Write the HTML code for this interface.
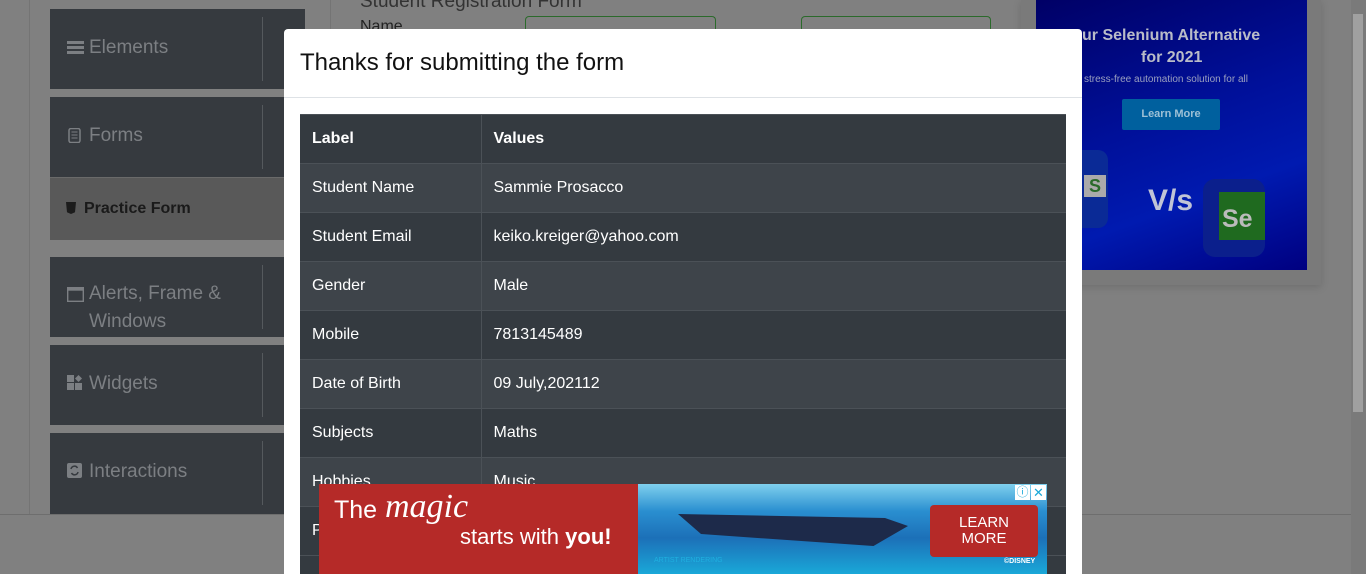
<!DOCTYPE html>
<html style="width:1366px;height:574px;overflow:hidden"><head><meta charset="utf-8"><style>
*{box-sizing:border-box;margin:0;padding:0}
body{width:1366px;height:574px;overflow:hidden;background:#808080;font-family:"Liberation Sans",Arial,sans-serif;position:relative}
.a{position:absolute}
.panel{position:absolute;left:50px;width:255px;height:80px;background:#363a3f;color:#7c7f83;font-size:19px}
.panel .t{position:absolute;left:39px;top:25px;line-height:28px}
.panel .d{position:absolute;left:212px;top:8px;width:1px;height:64px;background:#55595d}
.panel .ic{position:absolute;left:17px;top:31px;width:17px;height:15px}
.modal{position:absolute;left:284px;top:29px;width:798px;height:545px;background:#fff;border-radius:4px 4px 0 0;overflow:hidden}
table{position:absolute;left:16px;top:85px;width:766px;border-collapse:collapse;color:#fff;font-size:16px}
td,th{height:49px;padding:0 12px;text-align:left;border-top:1px solid #4b5157;vertical-align:middle}
td:first-child,th:first-child{width:181px;border-right:1px solid #4b5157}
tr:nth-child(odd){background:#343a40}
tr:nth-child(even){background:#3e444a}
th{font-weight:bold}
</style></head><body>
<div class="a" style="left:29px;top:0;width:1px;height:514px;background:#747474"></div>
<div class="a" style="left:330px;top:0;width:1px;height:514px;background:#747474"></div>
<div class="a" style="left:0;top:514px;width:1351px;height:1px;background:#6e6e6e"></div>
<div class="a" style="left:360px;top:-9px;font-size:19px;color:#333">Student Registration Form</div>
<div class="a" style="left:360px;top:18px;font-size:16px;color:#222">Name</div>
<div class="a" style="left:525px;top:16px;width:191px;height:20px;border:1px solid #2b6a2b;border-bottom:none;border-radius:4px 4px 0 0"></div>
<div class="a" style="left:801px;top:16px;width:190px;height:20px;border:1px solid #2b6a2b;border-bottom:none;border-radius:4px 4px 0 0"></div>

<div class="panel" style="top:9px"><svg class="ic" viewBox="0 0 17 15"><rect y="1" width="17" height="3" fill="#7c7f83"/><rect y="6" width="17" height="3" fill="#7c7f83"/><rect y="11" width="17" height="3" fill="#7c7f83"/></svg><div class="t">Elements</div><div class="d"></div></div>
<div class="panel" style="top:97px"><svg class="ic" viewBox="0 0 13 15" style="left:18px;top:31px;width:13px;height:15px"><rect x="1" y="0.5" width="11" height="14" rx="2" fill="none" stroke="#7c7f83" stroke-width="1.5"/><path d="M3.5 4h6M3.5 7h6M3.5 10h6" stroke="#7c7f83"/></svg><div class="t">Forms</div><div class="d"></div></div>
<div class="a" style="left:50px;top:177px;width:255px;height:63px;background:#595959;border-top:1px solid #6a6a6a"><div class="a" style="left:16px;top:24px;width:10px;height:12px;background:#1c1c1c;clip-path:polygon(0 0,100% 0,90% 85%,50% 100%,10% 85%)"></div><div class="a" style="left:34px;top:22px;font-size:16px;font-weight:bold;color:#1a1a1a">Practice Form</div></div>
<div class="panel" style="top:257px"><svg class="ic" viewBox="0 0 17 15" style="top:30px"><rect x="0.7" y="0.7" width="15.6" height="13.6" fill="none" stroke="#7c7f83" stroke-width="1.4"/><rect x="0.7" y="0.7" width="15.6" height="3" fill="#7c7f83"/></svg><div class="t" style="top:23px">Alerts, Frame &amp;<br>Windows</div><div class="d"></div></div>
<div class="panel" style="top:345px"><svg class="ic" viewBox="0 0 15 15" style="top:30px;width:15px"><rect x="0" y="0" width="7" height="7" fill="#7c7f83"/><rect x="0" y="8" width="7" height="7" fill="#7c7f83"/><rect x="8" y="8" width="7" height="7" fill="#7c7f83"/><path d="M11.5 0L15 3.5 11.5 7 8 3.5Z" fill="#7c7f83"/></svg><div class="t">Widgets</div><div class="d"></div></div>
<div class="panel" style="top:433px;height:81px"><svg class="ic" viewBox="0 0 15 15" style="top:30px;width:15px"><rect width="15" height="15" rx="2" fill="#7c7f83"/><path d="M4 6a3.5 3.5 0 0 1 6.5-1M11 9a3.5 3.5 0 0 1-6.5 1" stroke="#363a3f" stroke-width="1.5" fill="none"/></svg><div class="t">Interactions</div><div class="d"></div></div>

<div class="a" style="left:1021px;top:0;width:300px;height:285px;background:#7a7a7a;box-shadow:0 2px 8px rgba(0,0,0,.15)"></div>
<div class="a" style="left:1036px;top:0;width:271px;height:270px;background:linear-gradient(160deg,#000066 0%,#00109a 45%,#001ab0 70%,#000080 100%);overflow:hidden">
<div class="a" style="left:46px;top:27px;font-size:16px;font-weight:bold;color:#b9bcc8;white-space:nowrap">ur Selenium Alternative</div>
<div class="a" style="left:105px;top:49px;font-size:16px;font-weight:bold;color:#b9bcc8">for 2021</div>
<div class="a" style="left:48px;top:74px;font-size:10px;color:#9aa0c0;white-space:nowrap">stress-free automation solution for all</div>
<div class="a" style="left:86px;top:99px;width:98px;height:31px;background:#00609e;border-radius:2px;color:#9cc0d6;font-size:11px;font-weight:bold;text-align:center;line-height:31px">Learn More</div>
<div class="a" style="left:0;top:150px;width:72px;height:78px;background:#0a2a96;border-radius:10px"></div>
<div class="a" style="left:0;top:162px;width:32px;height:46px;background:#3a6a1a;clip-path:polygon(0 0,100% 0,70% 50%,100% 100%,0 100%)"></div>
<div class="a" style="left:48px;top:175px;width:22px;height:22px;background:#aaa;color:#2a6a2a;font-weight:bold;text-align:center;font-size:18px;line-height:22px">S</div>
<div class="a" style="left:112px;top:184px;font-size:30px;font-weight:bold;color:#c0c4d6">V/s</div>
<div class="a" style="left:167px;top:179px;width:62px;height:78px;background:#0b1f8c;border-radius:12px"></div>
<div class="a" style="left:183px;top:192px;width:46px;height:48px;background:#1f6a1f;color:#bbb;font-weight:bold;font-size:25px;padding:13px 0 0 3px">Se</div>
</div>

<div class="a" style="left:1351px;top:0;width:15px;height:574px;background:#7a7a7a"></div>
<div class="a" style="left:1353px;top:14px;width:10px;height:398px;background:#a0a0a0"></div>

<div class="modal">
<div class="a" style="left:16px;top:20px;font-size:24px;color:#111">Thanks for submitting the form</div>
<div class="a" style="left:0;top:68px;width:798px;height:1px;background:#dee2e6"></div>
<table>
<tr><th>Label</th><th>Values</th></tr>
<tr><td>Student Name</td><td>Sammie Prosacco</td></tr>
<tr><td>Student Email</td><td>keiko.kreiger@yahoo.com</td></tr>
<tr><td>Gender</td><td>Male</td></tr>
<tr><td>Mobile</td><td>7813145489</td></tr>
<tr><td>Date of Birth</td><td>09 July,202112</td></tr>
<tr><td>Subjects</td><td>Maths</td></tr>
<tr><td>Hobbies</td><td>Music</td></tr>
<tr><td>Picture</td><td></td></tr>
</table>
<div class="a" style="left:16px;top:526px;width:766px;height:19px;background:#343a40;border-top:1px solid #4b5157"><div class="a" style="left:181px;top:0;width:1px;height:19px;background:#4b5157"></div></div>
</div>

<div class="a" style="left:319px;top:484px;width:319px;height:90px;background:#b52a28;color:#fff">
<div class="a" style="left:15px;top:12px;font-size:25px">The</div>
<div class="a" style="left:66px;top:4px;font-size:34px;font-style:italic;font-family:'Liberation Serif',serif">magic</div>
<div class="a" style="left:141px;top:40px;font-size:22px;white-space:nowrap">starts with <b>you!</b></div>
</div>
<div class="a" style="left:638px;top:484px;width:409px;height:90px;background:linear-gradient(180deg,#7fd0ee 0%,#2a8fd0 30%,#1c70b8 60%,#1aa8d8 100%)">
<div class="a" style="left:40px;top:22px;width:230px;height:40px;background:#1d2a4a;clip-path:polygon(0 20%,90% 30%,100% 50%,85% 100%,10% 70%)"></div>
<div class="a" style="left:292px;top:21px;width:108px;height:52px;background:#b52a28;border-radius:4px;color:#fff;font-size:15px;text-align:center;line-height:16px;padding-top:10px">LEARN<br>MORE</div>
<div class="a" style="left:366px;top:74px;font-size:7px;color:#fff;font-weight:bold">©DISNEY</div>
<div class="a" style="left:16px;top:73px;font-size:7px;color:#1fb0e0">ARTIST RENDERING</div>
<div class="a" style="left:377px;top:1px;width:15px;height:15px;background:#fff;color:#1aa8d8;font-size:12px;text-align:center;line-height:15px">ⓘ</div>
<div class="a" style="left:393px;top:1px;width:15px;height:15px;background:#fff;color:#1aa8d8;font-size:13px;text-align:center;line-height:15px">✕</div>
</div>
</body></html>
